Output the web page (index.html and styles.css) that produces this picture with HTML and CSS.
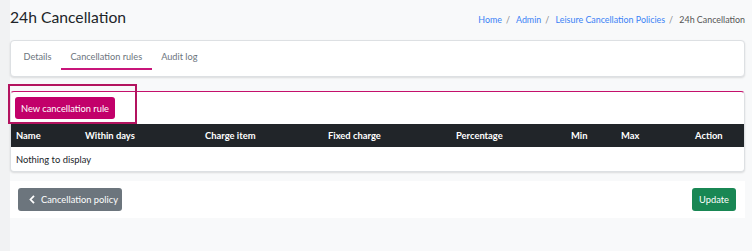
FILE: index.html
```html
<!DOCTYPE html>
<html lang="en">
<head>
  <meta charset="UTF-8">
  <title>24h Cancellation</title>
  <link rel="stylesheet" href="styles.css">
</head>
<body>

<main class="content">
  <div class="page-header">
    <h1>24h Cancellation</h1>
    <nav class="breadcrumb">
      <a href="#">Home</a><span class="sep">/</span>
      <a href="#">Admin</a><span class="sep">/</span>
      <a href="#">Leisure Cancellation Policies</a><span class="sep">/</span>
      <span class="current">24h Cancellation</span>
    </nav>
  </div>

  <div class="card tabs-card">
    <a href="#" class="tab">Details</a>
    <a href="#" class="tab active">Cancellation rules</a>
    <a href="#" class="tab">Audit log</a>
  </div>

  <div class="card rules-card">
    <div class="highlight"></div>
    <button class="btn btn-primary">New cancellation rule</button>
    <table class="rules">
      <colgroup>
        <col style="width: 69px">
        <col style="width: 120px">
        <col style="width: 123px">
        <col style="width: 128px">
        <col style="width: 115px">
        <col style="width: 50px">
        <col style="width: 74px">
        <col>
      </colgroup>
      <thead>
        <tr>
          <th>Name</th>
          <th>Within days</th>
          <th>Charge item</th>
          <th>Fixed charge</th>
          <th>Percentage</th>
          <th>Min</th>
          <th>Max</th>
          <th>Action</th>
        </tr>
      </thead>
      <tbody>
        <tr>
          <td colspan="8">Nothing to display</td>
        </tr>
      </tbody>
    </table>
  </div>

  <div class="card footer-card">
    <button class="btn btn-secondary">
      <svg width="6" height="9" viewBox="0 0 6 9"><path d="M5 0.8 L1.5 4.5 L5 8.2" fill="none" stroke="#fff" stroke-width="1.8"/></svg>
      Cancellation policy
    </button>
    <button class="btn btn-success">Update</button>
  </div>
</main>

</body>
</html>
```

FILE: styles.css
```css
body {
  margin: 0;
  background-color: #f1f2f3;
  font-family: Lato, "Noto Sans", sans-serif;
  color: #212529;
}
.content {
  margin-left: 10px;
  padding-right: 7px;
  background-color: #f8f9fa;
  height: 251px;
}
.page-header {
  display: flex;
  justify-content: space-between;
  align-items: center;
  height: 40px;
}
h1 {
  margin: 0 0 6px 0;
  font-size: 15.7px;
  font-weight: 400;
}
.breadcrumb {
  font-size: 8.9px;
  color: #555;
  margin-top: -2px;
}
.breadcrumb a {
  color: #3b82f6;
  text-decoration: none;
}
.breadcrumb .sep {
  color: #888;
  margin: 0 4px;
}
.card {
  background-color: white;
  border: 1px solid #dde0e3;
  border-radius: 4px;
  box-shadow: 0 1px 2px rgba(0,0,0,0.12);
}
.tabs-card {
  display: flex;
  padding: 3px 3px 6px 3px;
  height: 26px;
}
.tab {
  display: flex;
  align-items: center;
  padding: 0 9.5px;
  font-size: 9.2px;
  color: #6c757d;
  text-decoration: none;
  border-bottom: 2px solid transparent;
}
.tab.active {
  border-bottom-color: #c8157a;
}
.rules-card {
  position: relative;
  margin-top: 14px;
  border-top-color: #c4106c;
  padding-top: 5px;
}
.highlight {
  position: absolute;
  top: -8px;
  left: -3px;
  width: 125px;
  height: 36px;
  border: 2px solid #b3135f;
}
.btn {
  border: none;
  border-radius: 3px;
  color: white;
  font-family: inherit;
  font-size: 9.3px;
  height: 23px;
  padding: 0;
  white-space: nowrap;
  cursor: pointer;
}
.btn-primary {
  display: block;
  margin-left: 4px;
  width: 100px;
  height: 22px;
  background-color: #c2006a;
}
.btn-secondary {
  display: flex;
  align-items: center;
  gap: 6px;
  width: 104px;
  background-color: #6c757d;
  padding: 0 0 0 11px;
}
.btn-success {
  width: 44px;
  background-color: #198754;
}
table.rules {
  width: 100%;
  margin-top: 5px;
  border-collapse: collapse;
  table-layout: fixed;
  font-size: 9.4px;
}
.rules th {
  background-color: #212529;
  color: white;
  text-align: left;
  font-weight: bold;
  height: 23px;
  padding: 0 5px;
}
.rules td {
  height: 24px;
  padding: 0 5px;
}
.footer-card {
  display: flex;
  justify-content: space-between;
  align-items: center;
  margin-top: 9px;
  padding: 6px 8px 6px 7px;
  border-color: white;
  box-shadow: none;
  border-radius: 0;
}
```
